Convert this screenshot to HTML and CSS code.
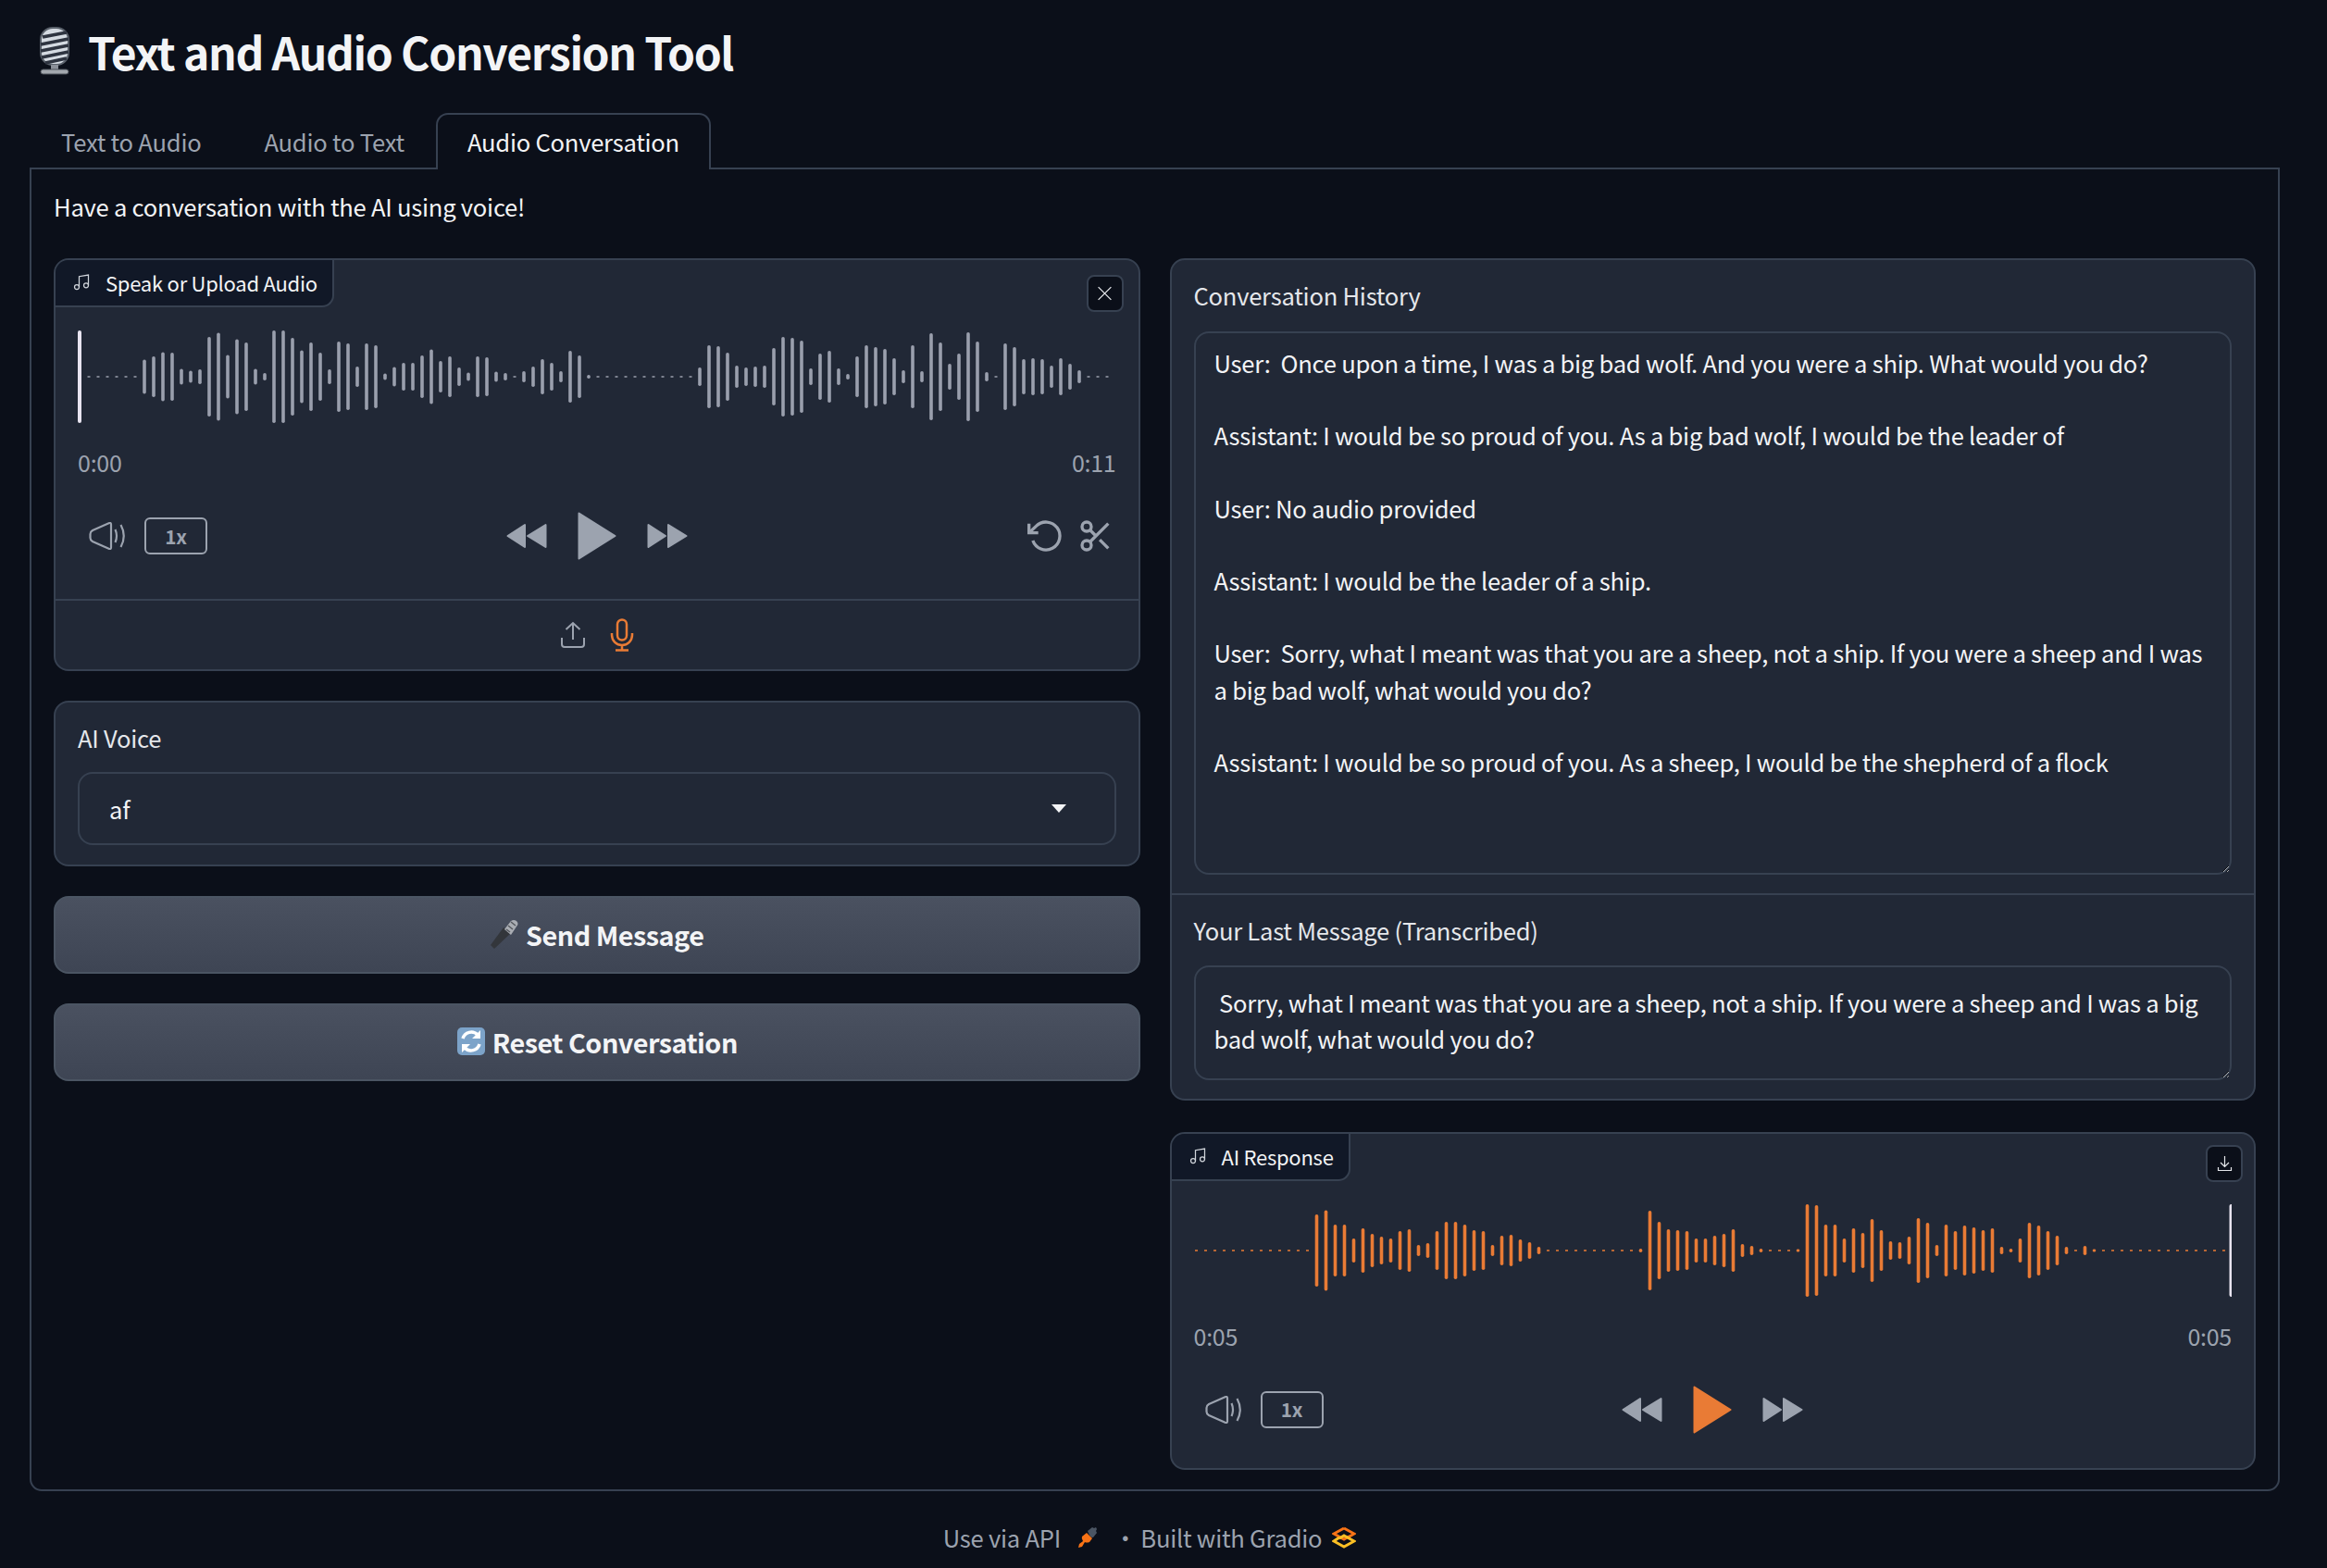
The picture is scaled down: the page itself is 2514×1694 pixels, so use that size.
FILE: index.html
```html
<!DOCTYPE html>
<html>

<head>
    <title>Text and Audio Conversion Tool</title>
    <meta charset="utf-8" />
    <link rel="stylesheet" href="styles.css">
</head>

<body>
    <!-- shared icons -->
    <svg class="sprites" xmlns="http://www.w3.org/2000/svg">
        <symbol id="i-music" viewBox="0 0 24 24">
            <path d="M9 18V4.500l12-2V16" />
            <circle cx="6" cy="18" r="3" />
            <circle cx="18" cy="16" r="3" />
        </symbol>
        <symbol id="i-volume" viewBox="0 0 40 30">
            <path d="M3.500 9 21 1.300q2.500-1 2.500 1.200v25q0 2.200-2.500 1.200L3.500 21Q1 19.500 1 17v-4q0-2.500 2.500-4Z" />
            <path d="M28 8q3 7 0 14" />
            <path d="M34 3q6.500 12 0 24" />
        </symbol>
        <symbol id="i-rewind" viewBox="0 0 44 30">
            <path d="M1.500 15 20 3v24Z M23 15 42.500 3v24Z" />
        </symbol>
        <symbol id="i-forward" viewBox="0 0 44 30">
            <path d="M1.500 3 20 15 1.500 27Z M23 3l19.500 12L23 27Z" />
        </symbol>
        <symbol id="i-play" viewBox="0 0 42 52">
            <path d="M1.500 1.500 40.500 26 1.500 50.500Z" />
        </symbol>
    </svg>

    <main class="page">
        <h1 class="title">
            <svg class="mic-emoji" viewBox="0 0 36 52">
                <rect x="3" y="1" width="30" height="40" rx="13" fill="#d5dbe2" stroke="#59606a" stroke-width="2" />
                <path d="M5 11 31 6M3 19l30-6M3 26l30-6M4 33l29-6M8 39l23-5" stroke="#2e3440" stroke-width="3.500" fill="none" />
                <path d="M14 41h8v6h-8z" fill="#8b9099" />
                <rect x="3" y="46" width="30" height="5" rx="2.500" fill="#a3a8ae" stroke="#4d525a" />
            </svg>
            Text and Audio Conversion Tool
        </h1>

        <div class="tabs">
            <button class="tab">Text to Audio</button>
            <button class="tab">Audio to Text</button>
            <button class="tab tab-active">Audio Conversation</button>
        </div>

        <section class="panel">
            <p class="intro">Have a conversation with the AI using voice!</p>

            <div class="columns">
                <div class="col col-left">
                    <div class="block audio-block">
                        <div class="block-label">
                            <svg class="label-icon"><use href="#i-music" /></svg>
                            Speak or Upload Audio
                        </div>
                        <button class="corner-btn">
                            <svg viewBox="0 0 16 16"><path d="M1.500 1.500l13 13M14.500 1.500l-13 13" /></svg>
                        </button>
                        <div class="player">
                            <svg class="wave" id="waveInput"></svg>
                            <div class="times"><span>0:00</span><span>0:11</span></div>
                            <div class="controls">
                                <div class="ctrl-left">
                                    <svg class="ic-volume"><use href="#i-volume" /></svg>
                                    <span class="speed">1x</span>
                                </div>
                                <div class="ctrl-mid">
                                    <svg class="ic-skip"><use href="#i-rewind" /></svg>
                                    <svg class="ic-play"><use href="#i-play" /></svg>
                                    <svg class="ic-skip"><use href="#i-forward" /></svg>
                                </div>
                                <div class="ctrl-right">
                                    <svg class="ic-edit" viewBox="0 0 24 24">
                                        <polyline points="1 4 1 10 7 10" />
                                        <path d="M3.510 15a9 9 0 1 0 2.130-9.360L1 10" />
                                    </svg>
                                    <svg class="ic-edit" viewBox="0 0 24 24">
                                        <circle cx="6" cy="6" r="3" />
                                        <circle cx="6" cy="18" r="3" />
                                        <path d="M20 4 8.120 15.880M14.470 14.480 20 20M8.120 8.120 12 12" />
                                    </svg>
                                </div>
                            </div>
                        </div>
                        <div class="sources">
                            <svg class="ic-upload" viewBox="0 0 28 30">
                                <path d="M14 20V2M6.500 9 14 2l7.500 7M2 18v7q0 3 3 3h18q3 0 3-3v-7" />
                            </svg>
                            <svg class="ic-mic" viewBox="0 0 26 36">
                                <rect x="8" y="1.500" width="10" height="22" rx="5" />
                                <path d="M2 16v2a11 11 0 0 0 22 0v-2M13 29v5M6 34.500h14" />
                            </svg>
                        </div>
                    </div>

                    <div class="block voice-block">
                        <div class="field-label">AI Voice</div>
                        <div class="select">
                            <span>af</span>
                            <svg class="select-arrow" viewBox="0 0 16 9"><path d="M0 0h16L8 9Z" /></svg>
                        </div>
                    </div>

                    <button class="action-btn">
                        <svg class="btn-emoji" viewBox="0 0 32 32">
                            <path d="M1 28 15 9l8 6L5 32Z" fill="#33363b" />
                            <path d="M16 11 23 2q3-2 6 0 3 3 0 6l-6 9Z" fill="#a9adb3" />
                            <path d="M23 3l5 4M20 7l5 4M18 11l4 3" stroke="#55585e" stroke-width="1.500" />
                        </svg>
                        Send Message
                    </button>
                    <button class="action-btn">
                        <svg class="btn-emoji" viewBox="0 0 32 32">
                            <rect x="1" y="1" width="30" height="30" rx="5" fill="#7ca3c9" />
                            <path d="M7 13a9.500 9.500 0 0 1 16-4" stroke="#fff" stroke-width="3.500" fill="none" />
                            <path d="M25 19a9.500 9.500 0 0 1-16 4" stroke="#fff" stroke-width="3.500" fill="none" />
                            <path d="M26 4v9h-9ZM6 28v-9h9Z" fill="#fff" />
                        </svg>
                        Reset Conversation
                    </button>
                </div>

                <div class="col col-right">
                    <div class="block text-block">
                        <div class="text-part">
                            <div class="field-label">Conversation History</div>
                            <textarea class="textbox textbox-history" readonly>User:  Once upon a time, I was a big bad wolf. And you were a ship. What would you do?

Assistant: I would be so proud of you. As a big bad wolf, I would be the leader of

User: No audio provided

Assistant: I would be the leader of a ship.

User:  Sorry, what I meant was that you are a sheep, not a ship. If you were a sheep and I was a big bad wolf, what would you do?

Assistant: I would be so proud of you. As a sheep, I would be the shepherd of a flock</textarea>
                        </div>
                        <div class="text-part">
                            <div class="field-label">Your Last Message (Transcribed)</div>
                            <textarea class="textbox textbox-last" readonly> Sorry, what I meant was that you are a sheep, not a ship. If you were a sheep and I was a big bad wolf, what would you do?</textarea>
                        </div>
                    </div>

                    <div class="block audio-block response-block">
                        <div class="block-label">
                            <svg class="label-icon"><use href="#i-music" /></svg>
                            AI Response
                        </div>
                        <button class="corner-btn">
                            <svg viewBox="0 0 16 18"><path d="M8 1v11M3.500 8 8 12.500 12.500 8M1 13v3.500h14V13" /></svg>
                        </button>
                        <div class="player">
                            <svg class="wave" id="waveOutput"></svg>
                            <div class="times"><span>0:05</span><span>0:05</span></div>
                            <div class="controls">
                                <div class="ctrl-left">
                                    <svg class="ic-volume"><use href="#i-volume" /></svg>
                                    <span class="speed">1x</span>
                                </div>
                                <div class="ctrl-mid">
                                    <svg class="ic-skip"><use href="#i-rewind" /></svg>
                                    <svg class="ic-play ic-play-on"><use href="#i-play" /></svg>
                                    <svg class="ic-skip"><use href="#i-forward" /></svg>
                                </div>
                                <div class="ctrl-right"></div>
                            </div>
                        </div>
                    </div>
                </div>
            </div>
        </section>

        <footer class="footer">
            <span>Use via API</span>
            <svg class="foot-icon" viewBox="0 0 24 24">
                <path d="M12 5 17 1l2 1 2-1 1 2-1 2 1 2-4 5q-3 1-6-7Z" fill="#4b5563" />
                <path d="M11 7l6 6-3 4q-3 1-5 0l-3 5-4 1 1-4 4-3q-2-3-1-5Z" fill="#f97316" />
            </svg>
            <span class="foot-dot">·</span>
            <span>Built with Gradio</span>
            <svg class="foot-icon foot-logo" viewBox="0 0 26 24">
                <path d="M13 2 24 8l-7 4M13 2 2 8l11 6 5-3" fill="none" stroke="#f97316" stroke-width="3" />
                <path d="M8 12 2 16l11 6 11-6-11-6-5 3" fill="none" stroke="#fbbf24" stroke-width="3" />
            </svg>
        </footer>
    </main>

    <script src="waveform.js"></script>
</body>

</html>
```

FILE: styles.css
```css
* {
    box-sizing: border-box;
}

body {
    margin: 0;
    padding: 0;
    background-color: #0b0f19;
    color: #f3f4f6;
    font-family: "Noto Sans CJK SC", "Noto Sans", sans-serif;
    font-size: 25.6px;
    letter-spacing: -0.25px;
    line-height: 38.4px;
}

.sprites {
    display: none;
}

button {
    font-family: inherit;
    font-size: inherit;
    letter-spacing: inherit;
    color: inherit;
    cursor: pointer;
}

.page {
    padding: 0 51px 0 32px;
}

.title {
    display: flex;
    align-items: center;
    gap: 18px;
    height: 122px;
    margin: 0;
    padding: 0 0 12px 9px;
    font-size: 48px;
    font-weight: 700;
    letter-spacing: -1.35px;
    line-height: 64px;
}

.mic-emoji {
    width: 36px;
    height: 52px;
}

/* tabs */

.tabs {
    display: flex;
    height: 61px;
    margin-bottom: -2px;
}

.tab {
    position: relative;
    height: 61px;
    padding: 0 32px 3px;
    background: none;
    border: 2px solid transparent;
    border-bottom: none;
    border-radius: 13px 13px 0 0;
    color: #9ca3af;
}

.tab-active {
    z-index: 1;
    background-color: #0b0f19;
    border-color: #374151;
    color: #f3f4f6;
}

.panel {
    padding: 21px 24px 21px;
    border: 2px solid #374151;
    border-radius: 0 0 13px 13px;
}

.intro {
    margin: 0 0 37px;
}

.columns {
    display: grid;
    grid-template-columns: 1fr 1fr;
    gap: 32px;
}

.col {
    display: flex;
    flex-direction: column;
    gap: 32px;
}

.col-right {
    gap: 34px;
}

.block {
    position: relative;
    background-color: #212836;
    border: 2px solid #374151;
    border-radius: 16px;
}

/* audio */

.block-label {
    position: absolute;
    top: 0;
    left: 0;
    display: flex;
    align-items: center;
    gap: 16px;
    height: 51px;
    padding: 0 16px 2px 18px;
    background-color: #111827;
    border-right: 2px solid #374151;
    border-bottom: 2px solid #374151;
    border-radius: 14px 0 13px 0;
    font-size: 22px;
    line-height: 30px;
}

.label-icon {
    width: 20px;
    height: 20px;
    fill: none;
    stroke: #d1d5db;
    stroke-width: 1.500;
}

.corner-btn {
    position: absolute;
    top: 16px;
    right: 16px;
    display: flex;
    align-items: center;
    justify-content: center;
    width: 40px;
    height: 40px;
    padding: 0;
    background-color: #0b0f19;
    border: 2px solid #374151;
    border-radius: 8px;
}

.corner-btn svg {
    width: 17px;
    height: 18px;
    fill: none;
    stroke: #e5e7eb;
    stroke-width: 1.200;
}

.response-block .corner-btn {
    top: 12px;
    right: 12px;
}

.player {
    padding: 76px 24px 0;
}

.wave {
    display: block;
    width: 100%;
    height: 100px;
}

.times {
    display: flex;
    justify-content: space-between;
    margin-top: 23px;
    color: #9ca3af;
    font-size: 25px;
}

.controls {
    display: grid;
    grid-template-columns: 1fr auto 1fr;
    align-items: center;
    height: 52px;
    margin-top: 34px;
    padding: 0 2px;
}

.ctrl-left {
    display: flex;
    align-items: center;
    gap: 19px;
    margin-left: 10px;
}

.ctrl-mid {
    display: flex;
    align-items: center;
    gap: 33px;
}

.ctrl-right {
    display: flex;
    justify-content: flex-end;
    align-items: center;
    gap: 14px;
}

.ic-volume {
    width: 41px;
    height: 30px;
    fill: none;
    stroke: #9ca3af;
    stroke-width: 2.200;
}

.speed {
    display: flex;
    align-items: center;
    justify-content: center;
    width: 68px;
    height: 40px;
    border: 2px solid #9ca3af;
    border-radius: 6px;
    color: #9ca3af;
    font-size: 20.800px;
    font-weight: 700;
}

.ic-skip {
    width: 44px;
    height: 30px;
    fill: #9ca3af;
    stroke: #9ca3af;
    stroke-width: 2;
    stroke-linejoin: round;
}

.ic-play {
    width: 42px;
    height: 52px;
    fill: #9ca3af;
    stroke: #9ca3af;
    stroke-width: 2;
    stroke-linejoin: round;
}

.ic-play-on {
    fill: #e97b35;
    stroke: #e97b35;
}

.ic-edit {
    width: 40px;
    height: 40px;
    fill: none;
    stroke: #9ca3af;
    stroke-width: 2;
}

.sources {
    display: flex;
    align-items: center;
    justify-content: center;
    gap: 26px;
    height: 76px;
    margin-top: 42px;
    border-top: 2px solid #374151;
}

.ic-upload {
    width: 28px;
    height: 30px;
    fill: none;
    stroke: #9ca3af;
    stroke-width: 2;
}

.ic-mic {
    width: 26px;
    height: 36px;
    fill: none;
    stroke: #e97b35;
    stroke-width: 2.500;
}

.response-block .sources {
    display: none;
}

.response-block .controls {
    margin-bottom: 37px;
}

/* form blocks */

.voice-block {
    padding: 19px 24px 21px;
}

.field-label {
    margin-bottom: 18px;
    color: #e5e7eb;
}

.select {
    display: flex;
    align-items: center;
    justify-content: space-between;
    height: 79px;
    padding: 0 52px 0 32px;
    border: 2px solid #374151;
    border-radius: 16px;
}

.select-arrow {
    width: 16px;
    height: 9px;
    fill: #f3f4f6;
}

.action-btn {
    display: flex;
    align-items: center;
    justify-content: center;
    gap: 7px;
    height: 84px;
    padding-bottom: 3px;
    background: linear-gradient(to bottom, #4a5160, #3e4554);
    border: 2px solid #4b5563;
    border-radius: 16px;
    font-size: 28.800px;
    font-weight: 700;
    letter-spacing: -0.5px;
}

.btn-emoji {
    width: 32px;
    height: 32px;
}

.text-part {
    padding: 19px 24px 20px;
}

.text-part + .text-part {
    border-top: 2px solid #374151;
}

.text-part .field-label {
    margin-bottom: 19px;
}

.textbox {
    display: block;
    width: 100%;
    padding: 12px 20px;
    background: none;
    border: 2px solid #374151;
    border-radius: 16px;
    outline: none;
    color: #f3f4f6;
    color-scheme: dark;
    font-family: inherit;
    font-size: inherit;
    letter-spacing: inherit;
    line-height: 39.200px;
    overflow: hidden;
    resize: vertical;
}

.textbox-history {
    height: 587px;
}

.textbox-last {
    height: 124px;
    padding-top: 18px;
}

/* footer */

.footer {
    display: flex;
    align-items: center;
    justify-content: center;
    gap: 16px;
    height: 87px;
    padding: 14px 11px 0 0;
    color: #9ca3af;
}

.foot-icon {
    width: 26px;
    height: 24px;
}

.foot-dot {
    margin: 0 -12px 0 -1px;
}

.foot-logo {
    margin-left: -5px;
}
```

FILE: waveform.js
```js
// heights of each bar in px, bars sit 10px apart. 2 = the thin dash for silence
const DASHES = (n) => new Array(n).fill(2);

const inputBars = [
    ...DASHES(6),
    37, 44, 53, 52, 17, 13, 16, 86, 95, 47, 81, 74, 17, 8, 100, 100, 84, 57, 74, 52,
    16, 76, 72, 22, 72, 68, 7, 21, 30, 30, 46, 59, 34, 44, 20, 9, 44, 42, 11, 8,
    2, 12, 22, 38, 30, 12, 56, 46, 4,
    ...DASHES(11),
    20, 68, 66, 52, 24, 20, 22, 24, 62, 86, 84, 78, 18, 50, 56, 18, 6, 44, 68, 64,
    60, 40, 14, 68, 12, 94, 74, 28, 50, 96, 76, 10, 2, 72, 64, 38, 40, 38, 24, 40,
    28, 14,
    ...DASHES(3)
];

const outputBars = [
    ...DASHES(13),
    78, 87, 56, 56, 26, 48, 36, 30, 26, 42, 46, 12, 16, 42, 62, 62, 56, 44, 42, 12,
    32, 34, 24, 18, 8,
    ...DASHES(10),
    4, 86, 62, 46, 44, 42, 26, 26, 32, 36, 46, 14, 10, 4,
    ...DASHES(3),
    3, 100, 98, 56, 56, 26, 48, 38, 68, 44, 20, 18, 30, 70, 60, 12, 56, 42, 54, 50,
    44, 48, 8, 4, 26, 60, 54, 42, 32, 8, 2, 10, 3,
    ...DASHES(14)
];

function drawWave(id, bars, startX, color, cursorX) {
    const svg = document.getElementById(id);
    const ns = "http://www.w3.org/2000/svg";

    function addRect(x, y, w, h, r, fill) {
        const rect = document.createElementNS(ns, "rect");
        rect.setAttribute("x", x);
        rect.setAttribute("y", y);
        rect.setAttribute("width", w);
        rect.setAttribute("height", h);
        rect.setAttribute("rx", r);
        rect.setAttribute("fill", fill);
        svg.appendChild(rect);
    }

    bars.forEach((h, i) => {
        const dash = h <= 2;
        const w = dash ? 3 : 3.6;
        const barH = dash ? 1.5 : h;
        addRect(startX + i * 10 - w / 2, 50 - barH / 2, w, barH, dash ? 0 : 1.8, color);
    });

    addRect(cursorX - 2, 0, 4, 100, 2, "#e8e4f0");
}

drawWave("waveInput", inputBars, 12, "#9a9fad", 2);
drawWave("waveOutput", outputBars, 2.5, "#e97b35", 1120.5);
```
